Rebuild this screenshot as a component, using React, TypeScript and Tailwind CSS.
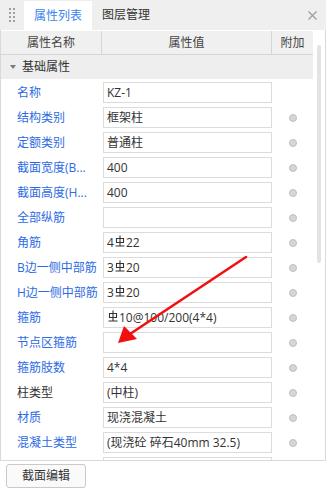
import React from "react";

type Row = {
  label: string;
  value: React.ReactNode;
  blue?: boolean;
  dot?: boolean;
};

// HRB400 rebar symbol
const Rebar = () => (
  <svg width="10" height="13" viewBox="0 0 10 13" className="inline-block mx-[1px] -mt-[3px] align-middle">
    <path d="M5 0.5V11.5M1.5 3.5H8.5V7.5H1.5ZM0.5 11H9.5" stroke="#333" strokeWidth="1.1" fill="none" />
  </svg>
);

const rows: Row[] = [
  { label: "名称", value: "KZ-1", blue: true, dot: false },
  { label: "结构类别", value: "框架柱", blue: true, dot: true },
  { label: "定额类别", value: "普通柱", blue: true, dot: true },
  { label: "截面宽度(B...", value: "400", blue: true, dot: true },
  { label: "截面高度(H...", value: "400", blue: true, dot: true },
  { label: "全部纵筋", value: "", blue: true, dot: true },
  { label: "角筋", value: <>4<Rebar />22</>, blue: true, dot: true },
  { label: "B边一侧中部筋", value: <>3<Rebar />20</>, blue: true, dot: true },
  { label: "H边一侧中部筋", value: <>3<Rebar />20</>, blue: true, dot: true },
  { label: "箍筋", value: <><Rebar />10@100/200(4*4)</>, blue: true, dot: true },
  { label: "节点区箍筋", value: "", blue: true, dot: true },
  { label: "箍筋肢数", value: "4*4", blue: true, dot: true },
  { label: "柱类型", value: "(中柱)", blue: false, dot: true },
  { label: "材质", value: "现浇混凝土", blue: true, dot: true },
  { label: "混凝土类型", value: "(现浇砼 碎石40mm 32.5)", blue: true, dot: true },
  { label: "", value: "", blue: true, dot: false },
];

const PropRow: React.FC<{ row: Row }> = ({ row }) => (
  <div className="flex h-[25px] items-center shrink-0">
    <div
      className={`w-[102px] pl-4 whitespace-nowrap leading-[16px] ${
        row.blue ? "text-[#2c6be3]" : "text-[#333]"
      }`}
    >
      {row.label}
    </div>
    <div className="w-[169px] h-[21px] border border-[#dcdcdc] pl-[3px] flex items-center text-[#333] whitespace-nowrap leading-[16px]">
      {row.value}
    </div>
    <div className="flex-1 flex justify-center pl-[1px]">
      {row.dot && (
        <span className="w-[8px] h-[8px] rounded-full bg-[#d6d6d6] border border-[#c0c0c0]" />
      )}
    </div>
  </div>
);

export default function App() {
  return (
    <div
      className="relative w-[326px] h-[491px] bg-white text-[12px] leading-[16px] overflow-hidden"
      style={{ fontFamily: '"Open Sans", "Noto Sans CJK SC", sans-serif' }}
    >
      {/* Tabs */}
      <div className="flex h-[30px] bg-[#efefef]">
        <div className="w-[24px] flex items-center justify-center">
          <div className="grid grid-cols-2 gap-x-[2px] gap-y-[2px]">
            {Array.from({ length: 8 }).map((_, i) => (
              <span key={i} className="w-[2px] h-[2px] bg-[#a0a0a0]" />
            ))}
          </div>
        </div>
        <div className="w-[68px] h-[29px] mt-px bg-white flex items-center justify-center text-[#3a84ee]">
          属性列表
        </div>
        <div className="px-[10px] flex items-center text-[#333]">图层管理</div>
        <div className="flex-1" />
        <div className="w-[28px] flex items-center justify-center">
          <svg width="9" height="9" viewBox="0 0 9 9">
            <path d="M0.5 0.5L8.5 8.5M8.5 0.5L0.5 8.5" stroke="#9a9a9a" strokeWidth="1.1" />
          </svg>
        </div>
      </div>

      {/* Property grid */}
      <div className="h-[431px] border-x border-b border-[#d9d9d9] pt-px flex">
        <div className="w-[312px] flex flex-col overflow-hidden">
          <div className="flex h-[24px] shrink-0 bg-[#f0f0f0] border-b border-[#d6d6d6] text-[#444]">
            <div className="w-[101px] border-r border-[#d6d6d6] flex items-center justify-center">属性名称</div>
            <div className="w-[170px] border-r border-[#d6d6d6] flex items-center justify-center">属性值</div>
            <div className="flex-1 flex items-center justify-center">附加</div>
          </div>
          <div className="flex h-[24px] shrink-0 items-center bg-[#eeeeee] text-[#333]">
            <svg width="6" height="4" viewBox="0 0 6 4" className="ml-[9px] mr-[6px]">
              <path d="M0 0H6L3 4Z" fill="#7a7a7a" />
            </svg>
            基础属性
          </div>
          <div className="pt-px flex flex-col">
            {rows.map((r, i) => (
              <PropRow key={i} row={r} />
            ))}
          </div>
        </div>
        <div className="flex-1 flex justify-center pt-[14px]">
          <div className="w-[4px] h-[218px] rounded-full bg-[#e3e3e3]" />
        </div>
      </div>

      {/* Footer */}
      <div className="px-[6px] pt-[3px]">
        <button className="w-[80px] h-[24px] border border-[#c9c9c9] rounded-[3px] bg-[#fafafa] text-[#333] flex items-center justify-center">
          截面编辑
        </button>
      </div>

      {/* Annotation arrow */}
      <svg className="absolute left-0 top-0 pointer-events-none" width="326" height="491">
        <line x1="246" y1="257" x2="130" y2="334" stroke="#f01010" strokeWidth="2.6" strokeLinecap="round" />
        <polygon points="118,343 124,326 137,339" fill="#f01010" />
      </svg>
    </div>
  );
}
